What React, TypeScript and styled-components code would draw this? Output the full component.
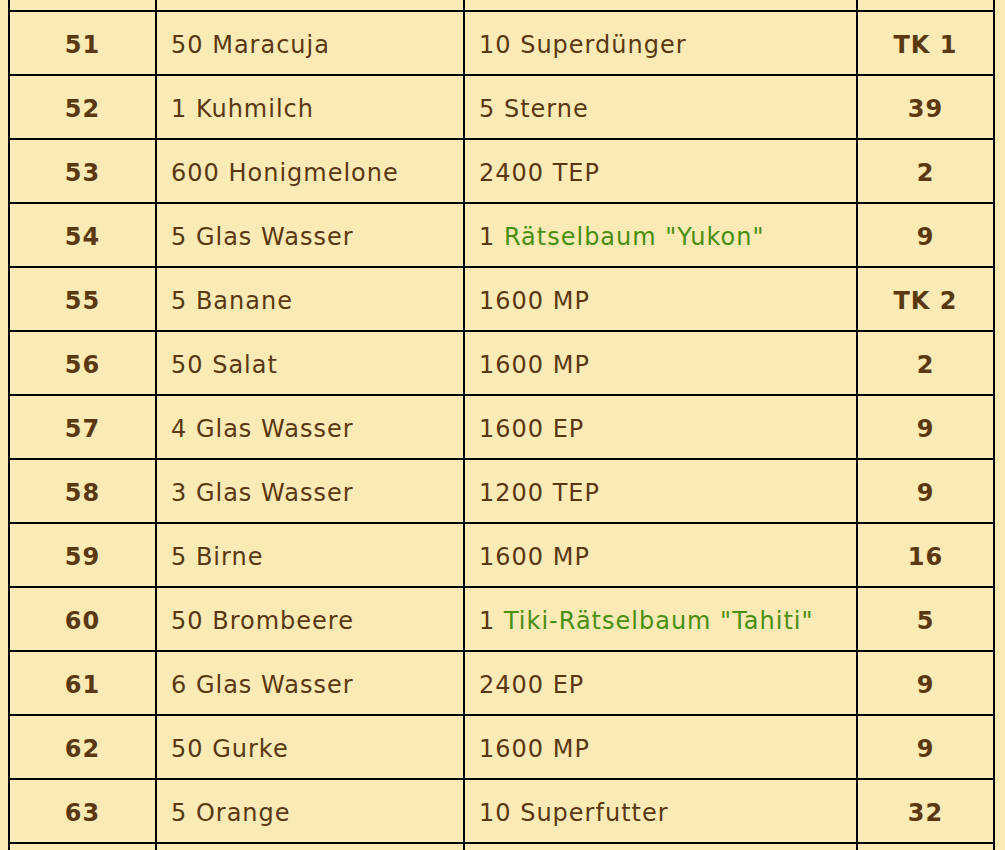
import styled, { createGlobalStyle } from "styled-components";

const GlobalStyle = createGlobalStyle`
  html, body {
    margin: 0;
    background: #faeab5;
  }
  body {
    padding: 0 8px;
    font-family: "DejaVu Sans", Verdana, sans-serif;
    color: #5a3811;
    overflow: hidden;
  }
`;

const Table = styled.table`
  border-collapse: collapse;
  width: 985px;
  margin-top: -54px;
  border: 2px solid #000;
  font-size: 24px;
  letter-spacing: 1px;
  table-layout: fixed;
`;

const Row = styled.tr`
  height: 64px;
`;

const Cell = styled.td<{ $bold?: boolean; $center?: boolean }>`
  border: 2px solid #000;
  padding: 3px 14px 0;
  text-align: ${(p) => (p.$center ? "center" : "left")};
  font-weight: ${(p) => (p.$bold ? 700 : 400)};
  white-space: nowrap;
`;

const Item = styled.span`
  color: #4a8e12;
`;

type Reward = { count: string; item?: string };

const ROWS: { level: string; need: string; reward: Reward; last: string }[] = [
  { level: "51", need: "50 Maracuja", reward: { count: "10 Superdünger" }, last: "TK 1" },
  { level: "52", need: "1 Kuhmilch", reward: { count: "5 Sterne" }, last: "39" },
  { level: "53", need: "600 Honigmelone", reward: { count: "2400 TEP" }, last: "2" },
  { level: "54", need: "5 Glas Wasser", reward: { count: "1", item: 'Rätselbaum "Yukon"' }, last: "9" },
  { level: "55", need: "5 Banane", reward: { count: "1600 MP" }, last: "TK 2" },
  { level: "56", need: "50 Salat", reward: { count: "1600 MP" }, last: "2" },
  { level: "57", need: "4 Glas Wasser", reward: { count: "1600 EP" }, last: "9" },
  { level: "58", need: "3 Glas Wasser", reward: { count: "1200 TEP" }, last: "9" },
  { level: "59", need: "5 Birne", reward: { count: "1600 MP" }, last: "16" },
  { level: "60", need: "50 Brombeere", reward: { count: "1", item: 'Tiki-Rätselbaum "Tahiti"' }, last: "5" },
  { level: "61", need: "6 Glas Wasser", reward: { count: "2400 EP" }, last: "9" },
  { level: "62", need: "50 Gurke", reward: { count: "1600 MP" }, last: "9" },
  { level: "63", need: "5 Orange", reward: { count: "10 Superfutter" }, last: "32" },
];

const EmptyRow = () => (
  <Row>
    <Cell $bold $center />
    <Cell />
    <Cell />
    <Cell $bold $center />
  </Row>
);

const App = () => {
  return (
    <>
      <GlobalStyle />
      <Table>
        <colgroup>
          <col style={{ width: 147 }} />
          <col style={{ width: 308 }} />
          <col style={{ width: 393 }} />
          <col style={{ width: 137 }} />
        </colgroup>
        <tbody>
          <EmptyRow />
          {ROWS.map((r) => (
            <Row key={r.level}>
              <Cell $bold $center>{r.level}</Cell>
              <Cell>{r.need}</Cell>
              <Cell>
                {r.reward.count}
                {r.reward.item && (
                  <>
                    {" "}
                    <Item>{r.reward.item}</Item>
                  </>
                )}
              </Cell>
              <Cell $bold $center>{r.last}</Cell>
            </Row>
          ))}
          <EmptyRow />
        </tbody>
      </Table>
    </>
  );
};

export default App;
